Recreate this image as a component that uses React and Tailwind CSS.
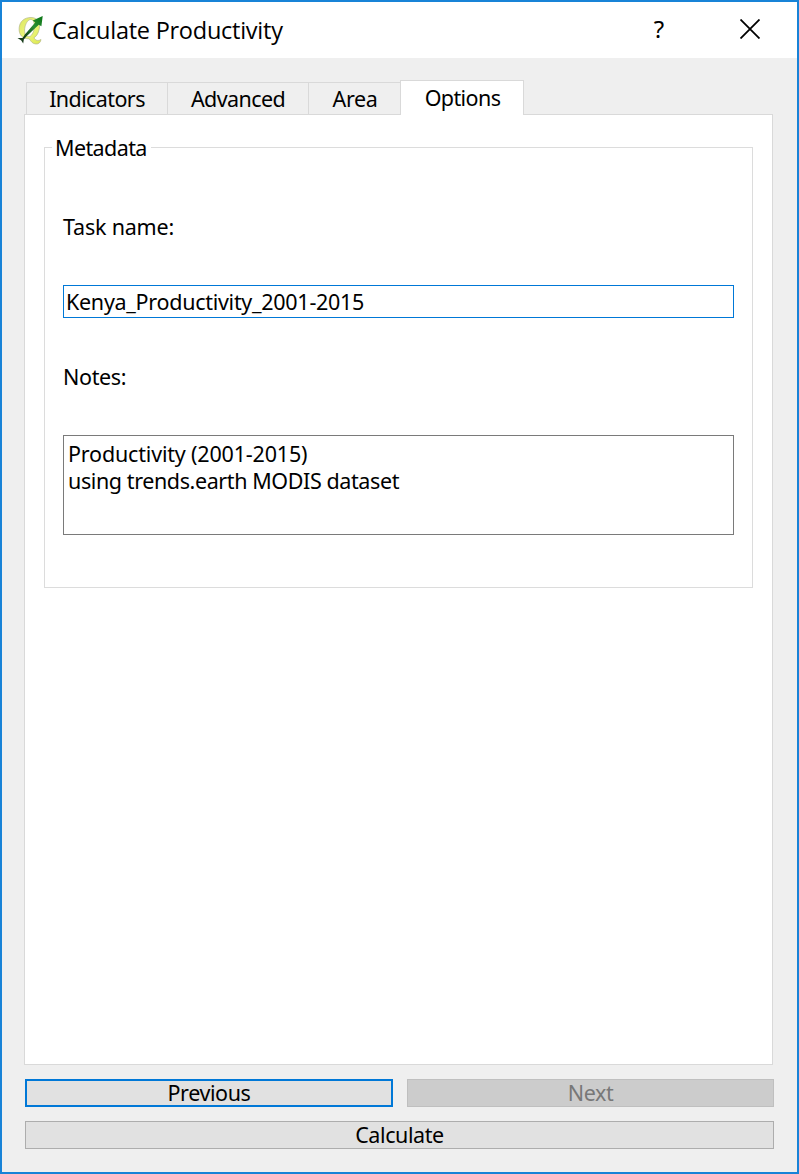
function QgisIcon() {
  return (
    <svg width="28" height="32" viewBox="0 0 28 32" className="block shrink-0">
      <defs>
        <linearGradient id="ring" x1="0" y1="0" x2="1" y2="1">
          <stop offset="0" stopColor="#dbe562" />
          <stop offset="0.5" stopColor="#eef77c" />
          <stop offset="1" stopColor="#dbe84e" />
        </linearGradient>
        <linearGradient id="arrow" x1="1" y1="0" x2="0" y2="1">
          <stop offset="0" stopColor="#0a7414" />
          <stop offset="0.5" stopColor="#2b8f35" />
          <stop offset="1" stopColor="#123d16" />
        </linearGradient>
      </defs>
      <path d="M14 3.500c6.500 0 9.500 5 8.300 11.200-.9 4.600-2.800 7.600-5.300 9 1.400 2.700 3.800 3.600 7 1.800-.4 3-2.400 4.700-5 4.500-3.600-.2-4.900-2.600-6.800-5.200C5.200 25 1.500 20.500 2.200 13.500 2.900 7.200 7.500 3.500 14 3.500zM13.400 5.500C10.500 6 8.300 10 7.700 14.500c-.6 4.500.8 8 3.800 8.100 3 .1 5.200-4 5.800-8.600.6-4.900-.9-8.900-3.900-8.500z" fill="url(#ring)" fillRule="evenodd" stroke="#b5b88a" strokeWidth="0.7" />
      <path d="M7.500 21 18.200 8.500 15.800 6.500 25.700 2 24.400 12.300 21.800 10.700 9.300 22.500z" fill="url(#arrow)" />
      <path d="M.5 24 5.500 24 8 20.500 9.300 22.500 6.800 25.500 6.200 29.500 4.300 26.500z" fill="#173c1a" />
    </svg>
  );
}

function Tab({ children, className }) {
  return (
    <div className={`flex h-8 items-center justify-center border-t border-l border-[#d9d9d9] bg-[#efefef] ${className}`}>
      {children}
    </div>
  );
}

function PushButton({ children, className }) {
  return (
    <button className={`flex h-7 items-center justify-center pb-0.5 tracking-[-0.4px] ${className}`}>
      {children}
    </button>
  );
}

export default function App() {
  return (
    <div className="flex h-[1174px] w-[799px] flex-col border-2 border-[#1883d7] bg-[#efefef] font-['Noto_Sans',sans-serif] text-[21.5px] leading-[27px] tracking-[-0.28px] whitespace-nowrap text-black">
      <header className="flex h-14 items-center bg-white pl-[15px]">
        <QgisIcon />
        <h1 className="ml-[7px] grow font-['Open_Sans','Noto_Sans',sans-serif] text-[23.500px] leading-8 tracking-[-0.25px]">Calculate Productivity</h1>
        <span className="mr-[76px] pb-1 text-[24px]">?</span>
        <svg width="20" height="20" viewBox="0 0 20 20" className="mr-[37px] mb-0.5 block">
          <path d="M.5.5l19 19M19.500.5l-19 19" stroke="#000" strokeWidth="1.800" />
        </svg>
      </header>

      <main className="flex grow flex-col pt-[22px] pl-[22px]">
        <nav className="relative z-10 -mb-px flex h-[35px] items-end pl-0.5 tracking-[-0.6px]">
          <Tab className="mb-px w-[141px]">Indicators</Tab>
          <Tab className="mb-px w-[141px]">Advanced</Tab>
          <Tab className="mb-px w-[92px] pl-px tracking-[-0.35px]">Area</Tab>
          <div className="flex h-[35px] w-[124px] items-center justify-center border border-b-0 border-[#d9d9d9] bg-white pb-0.5 pl-px">
            Options
          </div>
        </nav>

        <section className="h-[951px] w-[749px] border border-[#d9d9d9] bg-white px-[19px] pt-5">
          <div className="mt-3 h-[441px] w-[709px] border border-[#dcdcdc] px-[18px]">
            <h2 className="-mt-[14px] -ml-[11px] w-[99px] bg-white pl-[3px] tracking-[-0.6px]">Metadata</h2>
            <label className="mt-[52px] block tracking-[-0.2px]">Task name:</label>
            <div className="mt-[45px] flex h-[33px] w-[671px] items-center border border-[#0078d7] pl-0.5">
              Kenya_Productivity_2001-2015
            </div>
            <label className="mt-[45px] block tracking-[-0.35px]">Notes:</label>
            <div className="mt-[45px] h-[100px] w-[671px] border border-[#7a7a7a] pt-1 pl-1">
              <p className="tracking-[-0.18px]">Productivity (2001-2015)</p>
              <p className="tracking-[-0.4px]">using trends.earth MODIS dataset</p>
            </div>
          </div>
        </section>

        <footer className="mt-3.5 ml-px w-[749px]">
          <div className="flex justify-between">
            <PushButton className="w-[368px] border-2 border-[#0078d7] bg-[#e1e1e1]">Previous</PushButton>
            <PushButton className="w-[367px] border border-[#bfbfbf] bg-[#cccccc] text-[#787878]">Next</PushButton>
          </div>
          <PushButton className="mt-3.5 w-full border border-[#adadad] bg-[#e1e1e1]">Calculate</PushButton>
        </footer>
      </main>
    </div>
  );
}
